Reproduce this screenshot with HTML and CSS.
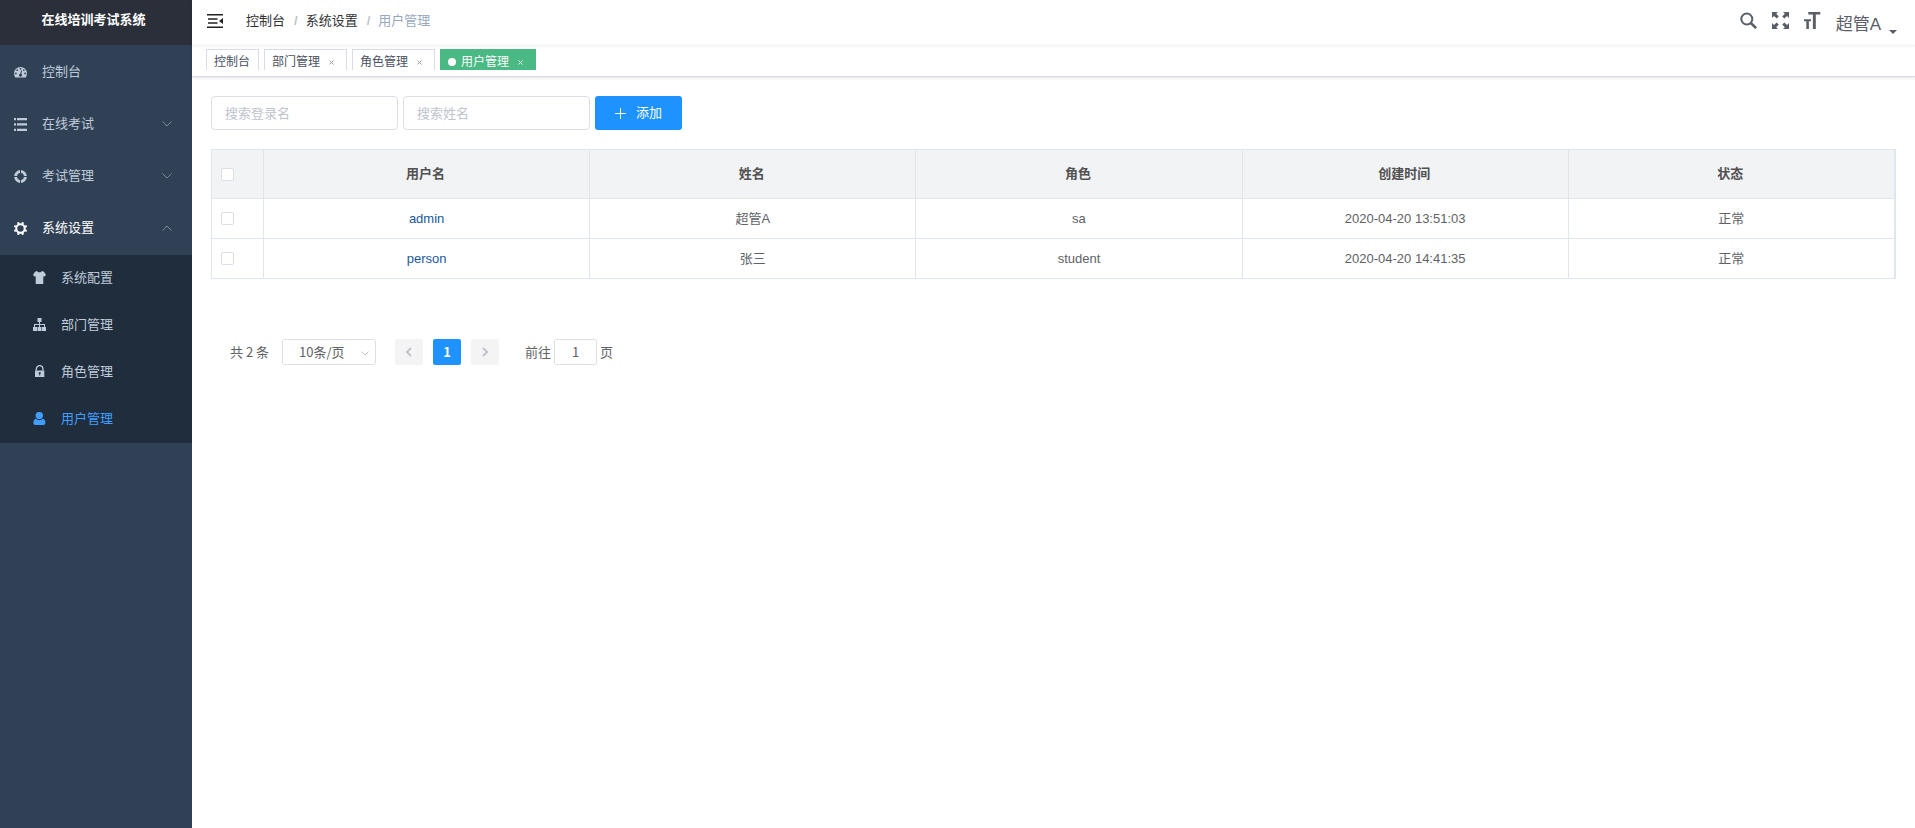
FILE: index.html
```html
<!DOCTYPE html>
<html lang="zh-CN">
<head>
<meta charset="utf-8">
<meta name="viewport" content="width=device-width, initial-scale=1">
<title>用户管理 - 在线培训考试系统</title>
<link rel="stylesheet" href="styles.css">
</head>
<body>
<div class="app">
  <aside class="sidebar">
    <h1 class="logo">在线培训考试系统</h1>
    <nav class="menu" aria-label="主菜单">
      <a class="menu-item" href="#dashboard">
        <svg class="icon" viewBox="0 0 13 13"><path fill="currentColor" fill-rule="evenodd" d="M6.500.900A6.400 6.400 0 0 0 .1 7.400c0 1.500.4 2.900 1.100 4.100h10.600c.7-1.200 1.100-2.600 1.100-4.100A6.400 6.400 0 0 0 6.500.900ZM6.500 1.900a.9.900 0 1 1 0 1.800.9.900 0 0 1 0-1.800ZM3.200 3.200a.9.900 0 1 1 0 1.800.9.900 0 0 1 0-1.800ZM1.900 6.500a.9.900 0 1 1 0 1.800.9.900 0 0 1 0-1.800ZM11.100 6.500a.9.900 0 1 1 0 1.800.9.900 0 0 1 0-1.800ZM9.800 3.200a.9.900 0 1 1 0 1.800.9.900 0 0 1 0-1.800ZM7.100 4.600l.9.200-.7 3.100a1.500 1.500 0 1 1-1-.2Z"/></svg>
        <span>控制台</span>
      </a>
      <a class="menu-item" href="#exam">
        <svg class="icon" viewBox="0 0 13 13"><path fill="currentColor" d="M0 0h2v2.300H0zM3 0h10v2.300H3zM0 5.300h2v2.300H0zM3 5.300h10v2.300H3zM0 10.700h2V13H0zM3 10.700h10V13H3z"/></svg>
        <span>在线考试</span>
        <svg class="arrow" viewBox="0 0 10 6"><path d="M.5.500 5 5 9.500.5"/></svg>
      </a>
      <a class="menu-item" href="#manage">
        <svg class="icon" viewBox="0 0 13 13"><circle cx="6.500" cy="6.500" r="4.900" fill="none" stroke="currentColor" stroke-width="3"/><path class="cut" d="M6.500 0v4M6.500 9v4M0 6.500h4M9 6.500h4"/></svg>
        <span>考试管理</span>
        <svg class="arrow" viewBox="0 0 10 6"><path d="M.5.500 5 5 9.500.5"/></svg>
      </a>
      <a class="menu-item open" href="#system">
        <svg class="icon" viewBox="0 0 13 13"><circle cx="6.500" cy="6.500" r="4.200" fill="none" stroke="currentColor" stroke-width="2"/><path fill="none" stroke="currentColor" stroke-width="2.200" d="M4.700 2.100 4 .3M8.300 2.100 9 .3M4.700 10.900 4 12.700M8.300 10.900l.7 1.800M2.100 4.700.3 4M2.100 8.300.3 9M10.900 4.700l1.800-.7M10.900 8.300l1.800.7"/></svg>
        <span>系统设置</span>
        <svg class="arrow" viewBox="0 0 10 6"><path d="M.5 5.500 5 1l4.500 4.500"/></svg>
      </a>
      <div class="submenu">
        <a class="sub-item" href="#config">
          <svg class="icon" viewBox="0 0 13 13"><path fill="currentColor" d="M4 0c.6 1 1.400 1.300 2.500 1.300S8.400 1 9 0l2 .7L13 4l-1.800 1.700-.9-.5V13H2.700V5.200l-.9.5L0 4 2 .7z"/></svg>
          <span>系统配置</span>
        </a>
        <a class="sub-item" href="#depart">
          <svg class="icon" viewBox="0 0 13 13"><path fill="currentColor" d="M4.500 0h4v4H7v2h5v3h1v4H9V9h2V7H7v2h1.500v4h-4V9H6V7H2v2h2v4H0V9h1V6h5V4H4.500z"/></svg>
          <span>部门管理</span>
        </a>
        <a class="sub-item" href="#role">
          <svg class="icon" viewBox="0 0 13 13"><path fill="currentColor" fill-rule="evenodd" d="M2 5.500h9.300V12H2zM5.700 7.200v1.600h.5v1.700h1V8.800h.5V7.200z"/><path fill="none" stroke="currentColor" stroke-width="1.300" d="M3.300 5.500V4a3.300 3.300 0 0 1 6.600 0v1.500"/></svg>
          <span>角色管理</span>
        </a>
        <a class="sub-item current" href="#user" aria-current="page">
          <svg class="icon" viewBox="0 0 13 13"><circle cx="6.300" cy="3.600" r="3.700" fill="currentColor"/><path fill="currentColor" d="M2.800 6.600c.9 1.100 2 1.600 3.500 1.600s2.600-.5 3.500-1.600C11.500 7.200 12.400 9 12.400 10.800 12.400 12.300 11.600 13 10.500 13H2.500C1.100 13 .4 12.300.4 10.800.4 9 1.200 7.200 2.800 6.600Z"/></svg>
          <span>用户管理</span>
        </a>
      </div>
    </nav>
  </aside>

  <div class="main">
    <header class="navbar">
      <button class="tool" type="button" aria-label="折叠菜单">
        <svg class="burger" viewBox="0 0 16 14"><path fill="currentColor" d="M0 0h16v1.500H0zM1 4.200h9.500v1.500H1zM1 8.300h9.500v1.500H1zM0 12.500h16V14H0zM16 4v6l-4-3z"/></svg>
      </button>
      <nav class="breadcrumb" aria-label="面包屑">
        <a href="#dashboard">控制台</a><b>/</b><a href="#system">系统设置</a><b>/</b><span>用户管理</span>
      </nav>
      <div class="tools">
        <button class="tool" type="button" aria-label="搜索">
          <svg class="tool-icon" viewBox="0 0 17 17"><circle cx="6.800" cy="7" r="5.500" fill="none" stroke="currentColor" stroke-width="2"/><path stroke="currentColor" stroke-width="2.600" d="m10.800 11 5.400 5.200"/></svg>
        </button>
        <button class="tool" type="button" aria-label="全屏">
          <svg class="tool-icon" viewBox="0 0 17 17"><path fill="currentColor" d="M0 0h6L4.200 1.800l2.600 2.600-2.200 2.200L2 4 0 6zM17 0v6l-2-2-2.600 2.600-2.200-2.200 2.600-2.600L11 0zM0 17v-6l2 2 2.600-2.600 2.200 2.200-2.600 2.600L6 17zM17 17h-6l1.800-1.800-2.600-2.600 2.200-2.200L15 13l2-2z"/></svg>
        </button>
        <button class="tool" type="button" aria-label="字体大小">
          <svg class="tool-icon" viewBox="0 0 17 17"><path fill="currentColor" d="M4.300 0h12v2.400h-4.500V17H8.900V2.400H4.300zM0 7.300h7v2H4.900V17H2.300V9.300H0z"/></svg>
        </button>
        <button class="user" type="button"><span>超管A</span><svg class="caret" viewBox="0 0 8 4"><path fill="currentColor" d="M0 0h8L4 4z"/></svg></button>
      </div>
    </header>

    <nav class="tags" aria-label="已打开页面">
      <div class="tag-list">
        <div class="tag"><a href="#dashboard">控制台</a></div>
        <div class="tag"><a href="#depart">部门管理</a><button type="button" aria-label="关闭部门管理"><svg viewBox="0 0 5 5"><path d="m.5.500 4 4m0-4-4 4"/></svg></button></div>
        <div class="tag"><a href="#role">角色管理</a><button type="button" aria-label="关闭角色管理"><svg viewBox="0 0 5 5"><path d="m.5.500 4 4m0-4-4 4"/></svg></button></div>
        <div class="tag active"><i class="dot"></i><a href="#user">用户管理</a><button type="button" aria-label="关闭用户管理"><svg viewBox="0 0 5 5"><path d="m.5.500 4 4m0-4-4 4"/></svg></button></div>
      </div>
    </nav>

    <main class="content">
      <form class="filters">
        <input class="field" type="text" placeholder="搜索登录名" aria-label="搜索登录名">
        <input class="field" type="text" placeholder="搜索姓名" aria-label="搜索姓名">
        <button class="add" type="button"><svg viewBox="0 0 11 11"><path d="M5.500 0v11M0 5.500h11"/></svg><span>添加</span></button>
      </form>

      <div class="table-box">
        <table class="grid">
          <thead>
            <tr><th class="pick"><input type="checkbox" aria-label="全选"></th><th>用户名</th><th>姓名</th><th>角色</th><th>创建时间</th><th>状态</th></tr>
          </thead>
          <tbody>
            <tr><td class="pick"><input type="checkbox" aria-label="选择 admin"></td><td><a href="#admin">admin</a></td><td>超管A</td><td>sa</td><td>2020-04-20 13:51:03</td><td>正常</td></tr>
            <tr><td class="pick"><input type="checkbox" aria-label="选择 person"></td><td><a href="#person">person</a></td><td>张三</td><td>student</td><td>2020-04-20 14:41:35</td><td>正常</td></tr>
          </tbody>
        </table>
      </div>

      <div class="pagination">
        <span class="total">共 2 条</span>
        <span class="size">
          <select aria-label="每页条数"><option>10条/页</option><option>20条/页</option><option>50条/页</option></select>
          <svg viewBox="0 0 8 5"><path d="M.5.500 4 4 7.500.5"/></svg>
        </span>
        <div class="pager">
          <button type="button" disabled aria-label="上一页"><svg viewBox="0 0 6 10"><path d="M5 1 1 5l4 4"/></svg></button>
          <button class="on" type="button">1</button>
          <button type="button" disabled aria-label="下一页"><svg viewBox="0 0 6 10"><path d="m1 1 4 4-4 4"/></svg></button>
        </div>
        <label class="jump">前往<input type="text" value="1">页</label>
      </div>
    </main>
  </div>
</div>
</body>
</html>
```
FILE: styles.css
```css
* {
  box-sizing: border-box;
}

body {
  margin: 0;
  font: 13px/20px "Liberation Sans", "Noto Sans CJK SC", sans-serif;
  color: #606266;
  background: #fff;
}

a {
  color: inherit;
  text-decoration: none;
}

button,
input,
select {
  font: inherit;
  color: inherit;
}

button {
  padding: 0;
  border: 0;
  background: none;
  cursor: pointer;
}

svg {
  display: block;
  flex: none;
}

.app {
  display: flex;
  min-height: 100vh;
}

/* Sidebar */
.sidebar {
  flex: none;
  width: 192px;
  background: #304156;
  color: #bfcbd9;
}

.logo {
  height: 45px;
  margin: 0;
  padding-right: 5px;
  background: #2b2f3a;
  color: #fff;
  font-size: 13px;
  line-height: 40px;
  text-align: center;
}

.menu {
  padding-top: 1px;
}

.menu-item,
.sub-item {
  display: flex;
  align-items: center;
}

.menu-item {
  height: 52px;
  gap: 15px;
  padding: 0 20px 0 14px;
}

.icon {
  width: 13px;
  height: 13px;
}

.cut {
  stroke: #304156;
  stroke-width: 1;
}

.arrow {
  width: 10px;
  height: 6px;
  margin-left: auto;
  fill: none;
  stroke: #7d8996;
}

.menu-item.open {
  color: #fff;
}

.submenu {
  margin-top: 1px;
  background: #1f2d3d;
}

.sub-item {
  height: 47px;
  gap: 15px;
  padding: 0 0 2px 33px;
}

.sub-item.current {
  color: #409eff;
}

/* Top bar */
.main {
  flex: 1;
  min-width: 0;
}

.navbar {
  display: flex;
  align-items: center;
  height: 45px;
  padding: 0 18px 4px 15px;
  box-shadow: 0 1px 4px rgba(0, 21, 41, 0.08);
}

.burger {
  width: 16px;
  height: 14px;
  color: #222;
}

.breadcrumb {
  display: flex;
  margin-left: 23px;
  color: #303133;
}

.breadcrumb b {
  margin: 0 8px 0 9px;
  color: #c0c4cc;
}

.breadcrumb span {
  color: #97a8be;
}

.tools {
  display: flex;
  align-items: center;
  gap: 15px;
  margin-left: auto;
  color: #5a5e66;
}

.tool-icon {
  width: 17px;
  height: 17px;
}

.user {
  display: flex;
  align-items: flex-end;
  gap: 8px;
  padding-top: 9px;
  font-size: 17px;
  line-height: 24px;
}

.caret {
  width: 8px;
  height: 4px;
  margin-bottom: 3px;
}

/* Visited page tags */
.tags {
  height: 32px;
  padding: 4px 14px 0;
  border-bottom: 1px solid #d8dce5;
  box-shadow: 0 1px 3px rgba(0, 0, 0, 0.12);
}

.tag-list {
  display: flex;
  gap: 5px;
  height: 21px;
  overflow: hidden;
}

.tag {
  display: flex;
  align-items: center;
  height: 26px;
  padding: 0 8px 0 7px;
  border: 1px solid #d8dce5;
  color: #495060;
  font-size: 12px;
}

.tag button {
  padding: 4px;
  margin-left: 5px;
}

.tag svg {
  width: 5px;
  height: 5px;
  fill: none;
  stroke: #9a9fa8;
}

.tag.active {
  border-color: #4ab983;
  background: #4ab983;
  color: #fff;
}

.tag.active svg {
  stroke: #fff;
}

.dot {
  width: 8px;
  height: 8px;
  margin-right: 5px;
  border-radius: 50%;
  background: #fff;
}

/* Page content */
.content {
  padding: 19px;
}

.filters {
  display: flex;
  gap: 5px;
  margin-bottom: 19px;
}

.field {
  width: 187px;
  height: 34px;
  padding: 0 13px;
  border: 1px solid #dcdfe6;
  border-radius: 4px;
}

.field::placeholder {
  color: #c0c4cc;
}

.add {
  display: flex;
  align-items: center;
  justify-content: center;
  gap: 10px;
  width: 87px;
  height: 34px;
  border-radius: 3px;
  background: #1e93ff;
  color: #fff;
}

.add svg {
  width: 11px;
  height: 11px;
  stroke: #fff;
}

.table-box {
  border: 1px solid #dfe6ec;
  border-bottom: 0;
}

.grid {
  width: 100%;
  table-layout: fixed;
  border-collapse: separate;
  border-spacing: 0;
}

.grid th,
.grid td {
  height: 40px;
  padding: 0;
  border: 0 solid #dfe6ec;
  border-width: 0 1px 1px 0;
  text-align: center;
}

.grid th {
  height: 49px;
  padding-right: 2px;
  background: #f1f3f5;
  color: #515151;
}

.grid .pick {
  width: 52px;
  padding-left: 9px;
  text-align: left;
}

.grid a {
  color: #20599c;
}

.pick input {
  display: block;
  appearance: none;
  width: 13px;
  height: 13px;
  margin: 0;
  border: 1px solid #dcdfe6;
  border-radius: 2px;
  background: #fff;
}

.pagination {
  display: flex;
  align-items: center;
  margin: 60px 19px 0;
  color: #606266;
  font: 13px/26px "Noto Sans CJK SC", sans-serif;
}

.total {
  margin-right: 13px;
}

.size {
  position: relative;
  margin-right: 19px;
}

.size select {
  display: block;
  appearance: none;
  width: 94px;
  height: 26px;
  padding: 0 16px;
  border: 1px solid #dcdfe6;
  border-radius: 3px;
  background: #fff;
  line-height: 24px;
}

.size svg {
  position: absolute;
  top: 12px;
  right: 7px;
  width: 8px;
  height: 5px;
  fill: none;
  stroke: #c0c4cc;
  pointer-events: none;
}

.pager {
  display: flex;
  gap: 10px;
  margin-right: 26px;
}

.pager button {
  display: flex;
  align-items: center;
  justify-content: center;
  width: 28px;
  height: 26px;
  border-radius: 2px;
  background: #f4f4f5;
  font-weight: 700;
}

.pager svg {
  width: 6px;
  height: 10px;
  fill: none;
  stroke: #c0c4cc;
  stroke-width: 2;
}

.pager .on {
  background: #1e93ff;
  color: #fff;
}

.jump {
  display: flex;
  align-items: center;
}

.jump input {
  width: 43px;
  height: 26px;
  margin: 0 3px;
  padding: 0;
  border: 1px solid #dcdfe6;
  border-radius: 3px;
  text-align: center;
}
```
